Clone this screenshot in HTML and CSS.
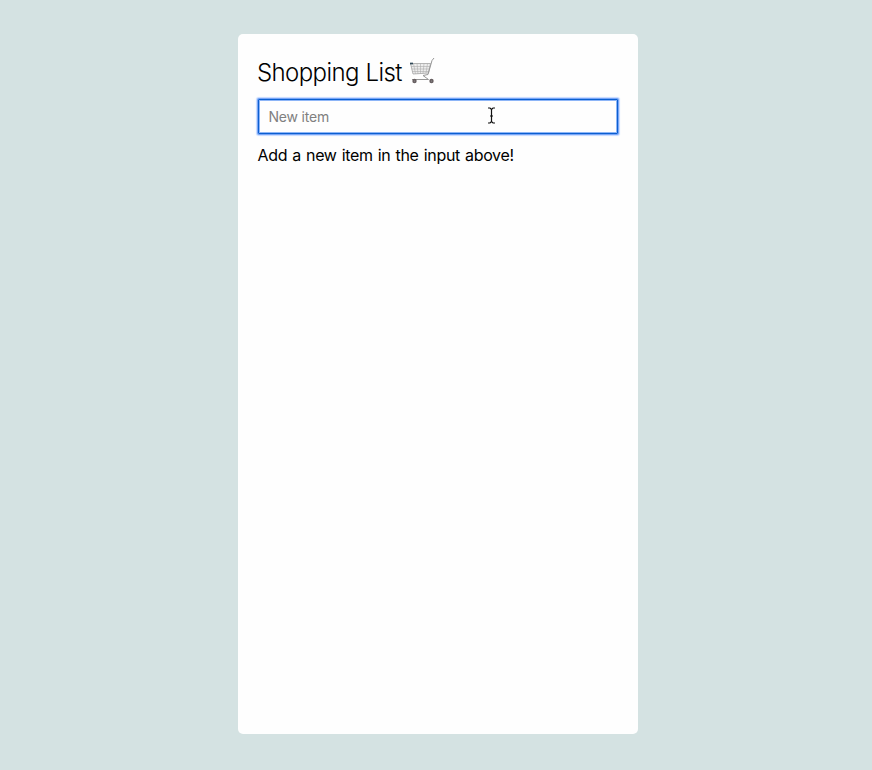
FILE: index.html
```html
<!DOCTYPE html>
<html lang="en">
<head>
<meta charset="utf-8">
<title>Shopping List</title>
<link rel="stylesheet" href="styles.css">
</head>
<body>
<main class="card">
  <h1 class="title"><span class="title-text">Shopping List</span>
    <svg class="cart" viewBox="0 0 26 28" fill="none" aria-hidden="true">
      <path d="M1.500 6.500H21.500L19.500 16L4 17Z" fill="#ededed" stroke="#989898" stroke-width=".7"/>
      <path d="M2 9.500H21M2.500 12H20.500M3 14.500H20M4.500 6.500L6.500 17M8 6.500L9 17M11.500 6.500V16.500M15 6.500L14 16.500M18.500 6.500L17 16" stroke="#acacac" stroke-width=".6"/>
      <path d="M25 1L23 3.500L19 17.500L14 18.500L19.500 22.500H3" stroke="#969696" stroke-width="1"/>
      <path d="M1 6.500H4" stroke="#2f4858" stroke-width="1.700"/>
      <circle cx="5.500" cy="24" r="2.200" fill="#675f61"/>
      <circle cx="22.500" cy="24" r="2.200" fill="#675f61"/>
      <circle cx="5.500" cy="24" r=".6" fill="#999"/>
      <circle cx="22.500" cy="24" r=".6" fill="#999"/>
    </svg>
  </h1>
  <div class="field">
    <input class="item-input" type="text" placeholder="New item" aria-label="New item">
    <svg class="ibeam" viewBox="0 0 9 17" fill="none" aria-hidden="true">
      <path d="M1 1H3L4.500 2.500L6 1H8M4.500 2.500V14.500M1 16H3L4.500 14.500L6 16H8M3 9H6" stroke="#111" stroke-width="1.200"/>
    </svg>
  </div>
  <p class="hint">Add a new item in the input above!</p>
</main>
</body>
</html>
```
FILE: styles.css
```css
* { box-sizing: border-box; }

body {
  margin: 0;
  padding: 34px 0 0 238px;
  min-height: 100vh;
  background: #d4e2e2;
  color: #000;
  font-family: Inter, "Liberation Sans", sans-serif;
}

.card {
  width: 400px;
  height: 700px;
  padding: 20px;
  border-radius: 5px;
  background: #fefefe;
}

.title {
  display: flex;
  align-items: flex-start;
  height: 36px;
  margin: 0 0 9px;
  font-size: 24px;
  font-weight: 300;
  line-height: 36px;
}

.title-text {
  width: 151px;
  padding-top: 1px;
  margin-left: -1px;
  white-space: nowrap;
  letter-spacing: -0.6px;
  word-spacing: 0.5px;
}

.cart {
  width: 26px;
  height: 28px;
  margin: 3px 0 0 1px;
}

.field {
  position: relative;
  height: 35px;
}

.item-input {
  display: block;
  width: 100%;
  height: 35px;
  padding: 0 10px 1px 9.5px;
  border: 1px solid #0b5fd0;
  border-radius: 1px;
  outline: none;
  background: #fefefe;
  box-shadow: inset 0 0 0 1px #8db5f7, 0 0 0 1px #78a5f7, 0 0 1px 2px #c6daff;
  font-family: inherit;
  font-size: 14px;
  letter-spacing: -0.2px;
}

.item-input::placeholder {
  color: #808080;
  opacity: 1;
}

.ibeam {
  position: absolute;
  left: 229px;
  top: 8px;
  width: 9px;
  height: 17px;
}

.hint {
  margin: 9px 0 0 -0.5px;
  font-size: 16px;
  line-height: 24px;
  letter-spacing: -0.32px;
  word-spacing: 0.9px;
  white-space: nowrap;
}
```
